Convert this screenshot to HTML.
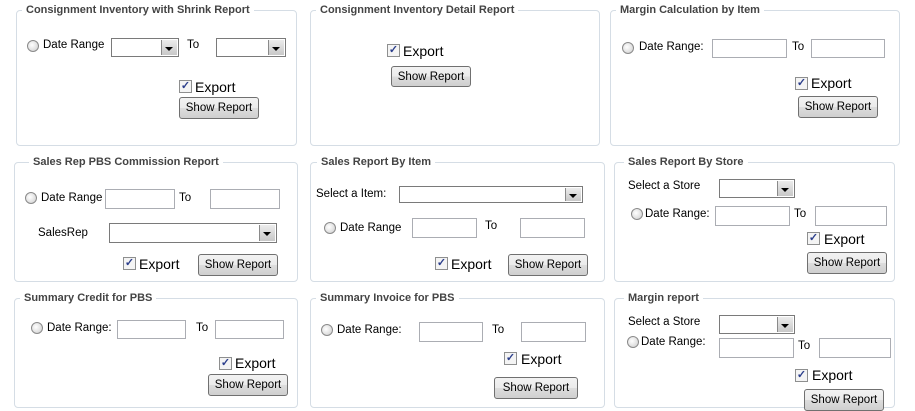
<!DOCTYPE html>
<html><head><meta charset="utf-8"><style>
*{box-sizing:border-box;margin:0;padding:0}
body{width:915px;height:400px;background:#fff;position:relative;overflow:hidden;font-family:"Liberation Sans",Arial,sans-serif;font-size:11.5px;color:#000}
.p{position:absolute;border:1px solid #d5dde5;border-radius:4px}
.lg{position:absolute;font-weight:bold;font-size:11px;color:#444;background:#fff;padding:0 4px;line-height:14px}
.t{position:absolute;line-height:16px;white-space:nowrap}
.ex{font-size:14px}
.r{position:absolute;width:12px;height:12px;border-radius:50%;border:1px solid #8a8a8a;background:radial-gradient(circle at 40% 40%,#fff,#ccc)}
.i{position:absolute;border:1px solid #abadb3;background:#fff}
.s{position:absolute;border:1px solid #7a7a7a;background:#fff}
.s::after{content:"";position:absolute;right:1px;top:1px;bottom:1px;width:15px;background:linear-gradient(#ececec,#c8c8c8);border-left:1px solid #8a8a8a}
.s::before{content:"";position:absolute;right:5px;top:50%;margin-top:-1px;border-left:4px solid transparent;border-right:4px solid transparent;border-top:4px solid #000;z-index:1}
.c{position:absolute;width:13px;height:13px;border:1px solid #8e8f8f;background:#f4f4f4;color:#2c3f8c;font-size:11px;line-height:11px;text-align:center;font-weight:bold}
.b{position:absolute;border:1px solid #707070;border-radius:3px;background:linear-gradient(#f2f2f2,#ebebeb 50%,#dddddd 50%,#cfcfcf);font-size:11.5px;text-align:center;line-height:20px}
</style></head><body>

<div class="p" style="left:16px;top:10px;width:281px;height:136px"></div>
<div class="lg" style="left:22px;top:3px">Consignment Inventory with Shrink Report</div>
<div class="r" style="left:27px;top:40px"></div><div class="t" style="left:43px;top:37px">Date Range</div>
<div class="s" style="left:111px;top:38px;width:68px;height:19px"></div>
<div class="t" style="left:187px;top:37px">To</div>
<div class="s" style="left:216px;top:38px;width:70px;height:19px"></div>
<div class="c" style="left:179px;top:80px">✓</div><div class="t ex" style="left:195px;top:79px">Export</div>
<div class="b" style="left:179px;top:97px;width:80px;height:22px">Show Report</div>

<div class="p" style="left:310px;top:10px;width:290px;height:136px"></div>
<div class="lg" style="left:316px;top:3px">Consignment Inventory Detail Report</div>
<div class="c" style="left:387px;top:44px">✓</div><div class="t ex" style="left:403px;top:43px">Export</div>
<div class="b" style="left:391px;top:66px;width:80px;height:21px">Show Report</div>

<div class="p" style="left:610px;top:10px;width:290px;height:136px"></div>
<div class="lg" style="left:616px;top:3px">Margin Calculation by Item</div>
<div class="r" style="left:622px;top:42px"></div><div class="t" style="left:639px;top:39px">Date Range:</div>
<div class="i" style="left:712px;top:39px;width:75px;height:19px"></div>
<div class="t" style="left:792px;top:39px">To</div>
<div class="i" style="left:811px;top:39px;width:74px;height:19px"></div>
<div class="c" style="left:795px;top:77px">✓</div><div class="t ex" style="left:811px;top:75px">Export</div>
<div class="b" style="left:798px;top:96px;width:80px;height:22px">Show Report</div>

<div class="p" style="left:14px;top:162px;width:284px;height:120px"></div>
<div class="lg" style="left:29px;top:155px">Sales Rep PBS Commission Report</div>
<div class="r" style="left:25px;top:192px"></div><div class="t" style="left:41px;top:190px">Date Range</div>
<div class="i" style="left:105px;top:189px;width:70px;height:20px"></div>
<div class="t" style="left:179px;top:190px">To</div>
<div class="i" style="left:210px;top:189px;width:70px;height:20px"></div>
<div class="t" style="left:38px;top:225px">SalesRep</div>
<div class="s" style="left:109px;top:223px;width:168px;height:20px"></div>
<div class="c" style="left:123px;top:257px">✓</div><div class="t ex" style="left:139px;top:256px">Export</div>
<div class="b" style="left:198px;top:254px;width:80px;height:22px">Show Report</div>

<div class="p" style="left:310px;top:162px;width:295px;height:120px"></div>
<div class="lg" style="left:317px;top:155px">Sales Report By Item</div>
<div class="t" style="left:316px;top:186px">Select a Item:</div>
<div class="s" style="left:399px;top:186px;width:184px;height:17px"></div>
<div class="r" style="left:324px;top:222px"></div><div class="t" style="left:340px;top:220px">Date Range</div>
<div class="i" style="left:412px;top:218px;width:65px;height:20px"></div>
<div class="t" style="left:485px;top:218px">To</div>
<div class="i" style="left:520px;top:218px;width:65px;height:20px"></div>
<div class="c" style="left:435px;top:257px">✓</div><div class="t ex" style="left:451px;top:256px">Export</div>
<div class="b" style="left:508px;top:254px;width:80px;height:22px">Show Report</div>

<div class="p" style="left:614px;top:162px;width:281px;height:120px"></div>
<div class="lg" style="left:624px;top:155px">Sales Report By Store</div>
<div class="t" style="left:628px;top:178px">Select a Store</div>
<div class="s" style="left:719px;top:179px;width:76px;height:19px"></div>
<div class="r" style="left:631px;top:208px"></div><div class="t" style="left:645px;top:206px">Date Range:</div>
<div class="i" style="left:715px;top:206px;width:75px;height:20px"></div>
<div class="t" style="left:794px;top:206px">To</div>
<div class="i" style="left:815px;top:206px;width:72px;height:20px"></div>
<div class="c" style="left:807px;top:232px">✓</div><div class="t ex" style="left:824px;top:231px">Export</div>
<div class="b" style="left:807px;top:252px;width:80px;height:22px">Show Report</div>

<div class="p" style="left:14px;top:298px;width:284px;height:110px"></div>
<div class="lg" style="left:20px;top:291px">Summary Credit for PBS</div>
<div class="r" style="left:31px;top:322px"></div><div class="t" style="left:47px;top:320px">Date Range:</div>
<div class="i" style="left:117px;top:320px;width:69px;height:19px"></div>
<div class="t" style="left:196px;top:320px">To</div>
<div class="i" style="left:215px;top:320px;width:69px;height:19px"></div>
<div class="c" style="left:219px;top:357px">✓</div><div class="t ex" style="left:235px;top:355px">Export</div>
<div class="b" style="left:208px;top:374px;width:80px;height:22px">Show Report</div>

<div class="p" style="left:310px;top:298px;width:295px;height:110px"></div>
<div class="lg" style="left:316px;top:291px">Summary Invoice for PBS</div>
<div class="r" style="left:321px;top:324px"></div><div class="t" style="left:337px;top:322px">Date Range:</div>
<div class="i" style="left:419px;top:322px;width:64px;height:20px"></div>
<div class="t" style="left:492px;top:322px">To</div>
<div class="i" style="left:521px;top:322px;width:65px;height:20px"></div>
<div class="c" style="left:504px;top:352px">✓</div><div class="t ex" style="left:521px;top:351px">Export</div>
<div class="b" style="left:494px;top:377px;width:84px;height:22px">Show Report</div>

<div class="p" style="left:614px;top:298px;width:281px;height:110px"></div>
<div class="lg" style="left:624px;top:291px">Margin report</div>
<div class="t" style="left:628px;top:314px">Select a Store</div>
<div class="s" style="left:719px;top:315px;width:76px;height:19px"></div>
<div class="r" style="left:627px;top:336px"></div><div class="t" style="left:641px;top:334px">Date Range:</div>
<div class="i" style="left:719px;top:338px;width:75px;height:20px"></div>
<div class="t" style="left:798px;top:338px">To</div>
<div class="i" style="left:819px;top:338px;width:72px;height:20px"></div>
<div class="c" style="left:795px;top:369px">✓</div><div class="t ex" style="left:812px;top:367px">Export</div>
<div class="b" style="left:804px;top:389px;width:80px;height:22px">Show Report</div>

</body></html>
